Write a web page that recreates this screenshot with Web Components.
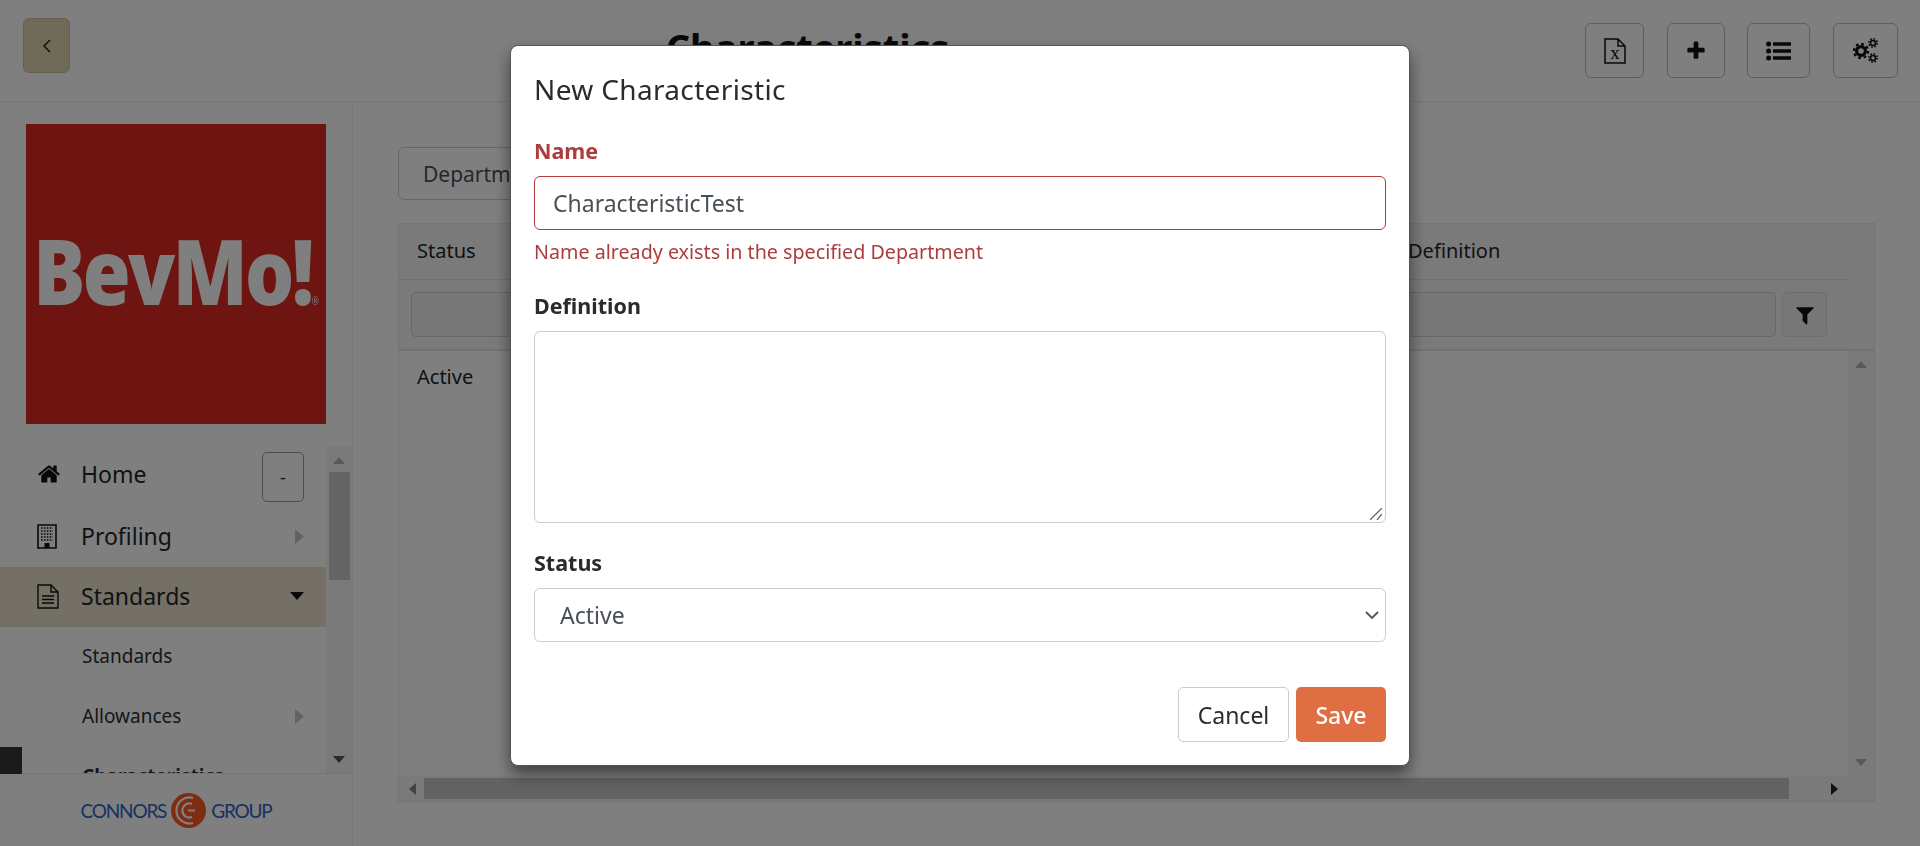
<!DOCTYPE html>
<html lang="en">
<head>
<meta charset="utf-8">
<title>Characteristics</title>
<style>
    html, body { margin: 0; height: 100%; overflow: hidden; background: #fff; }
    body { font-family: "Noto Sans", "Open Sans", sans-serif; color: #212529; }
</style>
</head>
<body>
<app-page></app-page>
<modal-dialog heading="New Characteristic"></modal-dialog>

<script>
const ICONS = {
    back: '<svg width="10" height="14" viewBox="0 0 10 14"><path d="M8 1L2 7l6 6" fill="none" stroke="#111" stroke-width="1.4"/></svg>',
    excel: '<svg width="22" height="26" viewBox="0 0 22 26"><path d="M1 1h13l7 7v17H1z M14 1v7h7" fill="none" stroke="#111" stroke-width="1.5"/><text x="11" y="21" text-anchor="middle" font-family="Liberation Serif, serif" font-size="19" fill="#111">x</text></svg>',
    plus: '<svg width="22" height="22" viewBox="0 0 1792 1792"><path fill="#111" d="M1600 736v192q0 40-28 68t-68 28h-416v416q0 40-28 68t-68 28h-192q-40 0-68-28t-28-68v-416h-416q-40 0-68-28t-28-68v-192q0-40 28-68t68-28h416v-416q0-40 28-68t68-28h192q40 0 68 28t28 68v416h416q40 0 68 28t28 68z"/></svg>',
    list: '<svg width="25" height="20" viewBox="0 0 25 20"><g fill="#111"><circle cx="2.6" cy="3" r="2.5"/><circle cx="2.6" cy="10" r="2.5"/><circle cx="2.6" cy="17" r="2.5"/><rect x="7" y="1.300" width="18" height="3.400" rx=".5"/><rect x="7" y="8.300" width="18" height="3.400" rx=".5"/><rect x="7" y="15.300" width="18" height="3.400" rx=".5"/></g></svg>',
    cogs: '<svg width="27" height="25" viewBox="0 0 27 25" fill="none" stroke="#111"><circle cx="9" cy="13" r="4.400" stroke-width="3.200"/><circle cx="9" cy="13" r="7" stroke-width="2.400" stroke-dasharray="2.700 2.800"/><circle cx="21" cy="5" r="2.500" stroke-width="1.600"/><circle cx="21" cy="5" r="4.200" stroke-width="1.600" stroke-dasharray="1.600 1.700"/><circle cx="21" cy="20" r="2.500" stroke-width="1.600"/><circle cx="21" cy="20" r="4.200" stroke-width="1.600" stroke-dasharray="1.600 1.700"/></svg>',
    filter: '<svg width="22" height="22" viewBox="0 0 1792 1792"><path fill="#111" d="M1595 295q17 41-14 70l-493 493v742q0 42-39 59-13 5-25 5-27 0-45-19l-256-256q-19-19-19-45v-486l-493-493q-31-29-14-70 17-39 59-39h1280q42 0 59 39z"/></svg>',
    home: '<svg width="24" height="24" viewBox="0 0 1792 1792"><path fill="#111" d="M1472 992v480q0 26-19 45t-45 19h-384v-384h-256v384h-384q-26 0-45-19t-19-45v-480q0-1 .5-3t.5-3l575-474 575 474q1 2 1 6zm223-69l-62 74q-8 9-21 11h-3q-13 0-21-7l-692-577-692 577q-12 8-24 7-13-2-21-11l-62-74q-8-10-7-23.500t11-21.500l719-599q32-26 76-26t76 26l244 204v-195q0-14 9-23t23-9h192q14 0 23 9t9 23v408l219 182q10 8 11 21.500t-7 23.500z"/></svg>',
    building: '<svg width="20" height="25" viewBox="0 0 20 25"><path d="M1 1h18v23H1z" fill="none" stroke="#111" stroke-width="1.600"/><path d="M4 4h12M4 7h12M4 10h12M4 13h12M4 16h12" stroke="#111" stroke-width="1.500" stroke-dasharray="1.600 1.300"/><rect x="7.500" y="19" width="5" height="5" fill="#111"/></svg>',
    file: '<svg width="22" height="25" viewBox="0 0 22 25"><path d="M1 1h13l7 7v16H1z M14 1v7h7" fill="none" stroke="#111" stroke-width="1.400"/><path d="M5 12h12M5 15.500h12M5 19h12" stroke="#111" stroke-width="1.300"/></svg>',
    right: '<svg width="9" height="15" viewBox="0 0 9 15"><path d="M0 0l9 7.500L0 15z" fill="#c4c4c4"/></svg>',
    down: '<svg width="14" height="8" viewBox="0 0 14 8"><path d="M0 0h14L7 8z" fill="#111"/></svg>',
    chevron: '<svg width="14" height="8" viewBox="0 0 14 8"><path d="M1 1l6 6 6-6" fill="none" stroke="#555" stroke-width="1.800"/></svg>'
};

class IconButton extends HTMLElement {
    constructor() {
        super();
        this.attachShadow({ mode: 'open' });
    }

    connectedCallback() {
        const w = this.getAttribute('w') || '58';
        this.shadowRoot.innerHTML = `
            <style>
                :host {
                    display: flex;
                    align-items: center;
                    justify-content: center;
                    box-sizing: border-box;
                    width: ${w}px;
                    height: 55px;
                    border: 1px solid #bbb;
                    border-radius: 6px;
                }
            </style>
            <slot></slot>
        `;
    }
}

class TopBar extends HTMLElement {
    constructor() {
        super();
        this.attachShadow({ mode: 'open' });
    }

    connectedCallback() {
        this.shadowRoot.innerHTML = `
            <style>
                :host {
                    display: flex;
                    align-items: center;
                    box-sizing: border-box;
                    height: 102px;
                    padding: 0 22px 0 23px;
                    border-bottom: 1px solid #eaeaea;
                }
                .back {
                    display: flex;
                    align-items: center;
                    justify-content: center;
                    box-sizing: border-box;
                    width: 47px;
                    height: 55px;
                    margin-bottom: 10px;
                    background: #dfd4ae;
                    border: 1px solid #cdc39f;
                    border-radius: 6px;
                }
                h1 {
                    flex: 1;
                    margin: 0 0 8px;
                    padding-right: 40px;
                    text-align: center;
                    font-size: 38px;
                    font-weight: 700;
                    color: #111;
                }
                .actions { display: flex; }
                .actions icon-button:nth-child(1) { margin-right: 23px; }
                .actions icon-button:nth-child(2) { margin-right: 22px; }
                .actions icon-button:nth-child(3) { margin-right: 23px; }
            </style>
            <div class="back">${ICONS.back}</div>
            <h1>Characteristics</h1>
            <div class="actions">
                <icon-button w="59">${ICONS.excel}</icon-button>
                <icon-button w="58">${ICONS.plus}</icon-button>
                <icon-button w="63">${ICONS.list}</icon-button>
                <icon-button w="65">${ICONS.cogs}</icon-button>
            </div>
        `;
    }
}

class ScrollBar extends HTMLElement {
    constructor() {
        super();
        this.attachShadow({ mode: 'open' });
    }

    connectedCallback() {
        const downArrow = this.getAttribute('down') || '#b0b0b0';
        const thumb = this.getAttribute('thumb') || '108';
        this.shadowRoot.innerHTML = `
            <style>
                :host {
                    display: flex;
                    flex-direction: column;
                    align-items: center;
                    flex: none;
                    box-sizing: border-box;
                    width: 26px;
                    background: #f5f5f5;
                }
                .up { margin: 10px 0 8px; }
                .thumb { width: 21px; height: ${thumb}px; background: #c8c8c8; }
                .down { margin-top: auto; margin-bottom: 10px; }
                svg { display: block; flex: none; }
            </style>
            <svg class="up" width="12" height="7" viewBox="0 0 12 7"><path d="M0 7h12L6 0z" fill="#b0b0b0"/></svg>
            <div class="thumb"></div>
            <svg class="down" width="12" height="7" viewBox="0 0 12 7"><path d="M0 0h12L6 7z" fill="${downArrow}"/></svg>
        `;
    }
}

class NavItem extends HTMLElement {
    constructor() {
        super();
        this.attachShadow({ mode: 'open' });
    }

    connectedCallback() {
        const sub = this.hasAttribute('sub');
        const active = this.hasAttribute('active');
        const bold = this.hasAttribute('bold');
        const lift = this.getAttribute('lift') || '2';
        this.shadowRoot.innerHTML = `
            <style>
                :host {
                    display: flex;
                    align-items: center;
                    flex: none;
                    box-sizing: border-box;
                    height: 60px;
                    padding: 0 22px ${lift}px 37px;
                    background: ${active ? '#eae0ca' : 'transparent'};
                    font-size: ${sub ? '19px' : '23px'};
                    font-weight: ${bold ? 700 : 400};
                    color: ${sub ? '#2b2f33' : '#212529'};
                }
                .icon { display: flex; width: 44px; flex: none; }
                .sub-gap { width: 45px; flex: none; }
                .end { margin-left: auto; display: flex; align-items: center; }
            </style>
            ${sub ? '<span class="sub-gap"></span>' : `<span class="icon">${ICONS[this.getAttribute('icon')] || ''}</span>`}
            <span>${this.getAttribute('label')}</span>
            <span class="end"><slot></slot></span>
        `;
    }
}

class SideBar extends HTMLElement {
    constructor() {
        super();
        this.attachShadow({ mode: 'open' });
    }

    connectedCallback() {
        this.shadowRoot.innerHTML = `
            <style>
                :host {
                    display: flex;
                    flex-direction: column;
                    flex: none;
                    position: relative;
                    box-sizing: border-box;
                    width: 353px;
                    border-right: 1px solid #eaeaea;
                }
                .logo {
                    display: flex;
                    align-items: center;
                    justify-content: center;
                    flex: none;
                    width: 300px;
                    height: 300px;
                    margin: 22px 0 23px 26px;
                    background: #dc2822;
                    overflow: hidden;
                }
                .logo span {
                    flex: none;
                    margin-bottom: 8px;
                    font-family: "Open Sans", sans-serif;
                    font-weight: 800;
                    font-size: 90px;
                    letter-spacing: -3px;
                    color: #fff;
                    white-space: nowrap;
                    transform: scaleX(.86);
                    filter: blur(.6px);
                }
                .logo small { font-size: 10px; font-weight: 400; letter-spacing: 0; }
                .menu {
                    display: flex;
                    flex: 1;
                    min-height: 0;
                    overflow: hidden;
                }
                .items {
                    display: flex;
                    flex-direction: column;
                    flex: 1;
                    min-width: 0;
                    overflow: hidden;
                }
                .minus {
                    display: flex;
                    align-items: center;
                    justify-content: center;
                    box-sizing: border-box;
                    width: 42px;
                    height: 50px;
                    margin-top: 6px;
                    border: 1px solid #999;
                    border-radius: 5px;
                    font-size: 18px;
                }
                .foot {
                    display: flex;
                    align-items: center;
                    justify-content: center;
                    gap: 5px;
                    flex: none;
                    height: 72px;
                    border-top: 1px solid #eaeaea;
                    font-family: "Lato", sans-serif;
                    font-size: 19px;
                    letter-spacing: -1.2px;
                    color: #2f62c4;
                }
                .foot svg { filter: blur(.4px); }
                .black {
                    position: absolute;
                    left: 0;
                    bottom: 72px;
                    width: 22px;
                    height: 27px;
                    background: #363636;
                }
            </style>
            <div class="logo"><span>BevMo!<small>®</small></span></div>
            <div class="menu">
                <div class="items">
                    <nav-item icon="home" label="Home" lift="6"><span class="minus">-</span></nav-item>
                    <nav-item icon="building" label="Profiling">${ICONS.right}</nav-item>
                    <nav-item icon="file" label="Standards" active>${ICONS.down}</nav-item>
                    <nav-item sub label="Standards"></nav-item>
                    <nav-item sub label="Allowances">${ICONS.right}</nav-item>
                    <nav-item sub bold label="Characteristics"></nav-item>
                </div>
                <scroll-bar down="#555"></scroll-bar>
            </div>
            <div class="black"></div>
            <div class="foot">
                <span>CONNORS</span>
                <svg width="35" height="35" viewBox="0 0 35 35"><circle cx="17.500" cy="17.500" r="17.500" fill="#ff5a24"/><path d="M22 5a13 13 0 1 0 0 25M21 11a7 7 0 1 0 0 13M17 17.500h7" fill="none" stroke="#fff" stroke-width="2.200"/></svg>
                <span>GROUP</span>
            </div>
        `;
    }
}

class DataGrid extends HTMLElement {
    constructor() {
        super();
        this.attachShadow({ mode: 'open' });
    }

    connectedCallback() {
        this.shadowRoot.innerHTML = `
            <style>
                :host {
                    display: flex;
                    flex-direction: column;
                    box-sizing: border-box;
                    flex: none;
                    width: 1477px;
                    height: 579px;
                    border: 1px solid #e8e8e8;
                    font-size: 20px;
                }
                .head {
                    display: flex;
                    flex-direction: column;
                    flex: none;
                    height: 127px;
                    background: #f5f5f5;
                    border-bottom: 2px solid #e2e2e2;
                    box-sizing: border-box;
                }
                .titles {
                    display: grid;
                    grid-template-columns: 991px 1fr;
                    align-items: center;
                    box-sizing: border-box;
                    height: 56px;
                    width: 1449px;
                    padding: 0 0 3px 18px;
                    border-bottom: 1px solid #e2e2e2;
                }
                .filters {
                    display: flex;
                    gap: 6px;
                    padding: 12px 0 0 12px;
                }
                .filter-input {
                    box-sizing: border-box;
                    width: 1365px;
                    height: 45px;
                    background: #eee;
                    border: 1px solid #cfcfcf;
                    border-radius: 5px;
                }
                .filter-btn {
                    display: flex;
                    align-items: center;
                    justify-content: center;
                    box-sizing: border-box;
                    width: 45px;
                    height: 45px;
                    background: #eee;
                    border: 1px solid #ddd;
                    border-radius: 5px;
                }
                .body { display: flex; flex: 1; min-height: 0; }
                .rows { flex: 1; padding: 12px 18px; }
                .bottom {
                    display: flex;
                    align-items: center;
                    flex: none;
                    height: 25px;
                    background: #f5f5f5;
                }
                .left-arrow { margin: 0 8px 0 10px; }
                .bar { width: 1365px; height: 21px; background: #c4c4c4; }
                .right-arrow { margin-left: 42px; }
            </style>
            <div class="head">
                <div class="titles"><span>Status</span><span>Definition</span></div>
                <div class="filters">
                    <div class="filter-input"></div>
                    <div class="filter-btn">${ICONS.filter}</div>
                </div>
            </div>
            <div class="body">
                <div class="rows">Active</div>
                <scroll-bar thumb="0"></scroll-bar>
            </div>
            <div class="bottom">
                <svg class="left-arrow" width="7" height="12" viewBox="0 0 7 12"><path d="M7 0v12L0 6z" fill="#888"/></svg>
                <div class="bar"></div>
                <svg class="right-arrow" width="7" height="12" viewBox="0 0 7 12"><path d="M0 0v12l7-6z" fill="#222"/></svg>
            </div>
        `;
    }
}

class MainPanel extends HTMLElement {
    constructor() {
        super();
        this.attachShadow({ mode: 'open' });
    }

    connectedCallback() {
        this.shadowRoot.innerHTML = `
            <style>
                :host {
                    display: flex;
                    flex-direction: column;
                    flex: 1;
                    gap: 23px;
                    padding: 45px 45px 0;
                }
                .department {
                    display: flex;
                    align-items: center;
                    box-sizing: border-box;
                    width: 400px;
                    height: 53px;
                    padding-left: 24px;
                    border: 1px solid #ccc;
                    border-radius: 6px;
                    font-size: 21px;
                    color: #495057;
                }
            </style>
            <div class="department">Department</div>
            <data-grid></data-grid>
        `;
    }
}

class AppPage extends HTMLElement {
    constructor() {
        super();
        this.attachShadow({ mode: 'open' });
    }

    connectedCallback() {
        this.shadowRoot.innerHTML = `
            <style>
                :host { display: flex; flex-direction: column; height: 846px; overflow: hidden; }
                .columns { display: flex; flex: 1; min-height: 0; }
            </style>
            <top-bar></top-bar>
            <div class="columns">
                <side-bar></side-bar>
                <main-panel></main-panel>
            </div>
        `;
    }
}

class FormField extends HTMLElement {
    constructor() {
        super();
        this.attachShadow({ mode: 'open' });
    }

    connectedCallback() {
        const invalid = this.hasAttribute('invalid');
        this.shadowRoot.innerHTML = `
            <style>
                :host { display: block; position: relative; }
                label {
                    display: block;
                    height: 27px;
                    margin-bottom: 12px;
                    line-height: 27px;
                    font-size: 21.5px;
                    font-weight: 700;
                    color: ${invalid ? '#ad3d3d' : '#2b2b2b'};
                }
            </style>
            <label>${this.getAttribute('label')}</label>
            <slot></slot>
        `;
    }
}

class ModalDialog extends HTMLElement {
    constructor() {
        super();
        this.attachShadow({ mode: 'open' });
    }

    connectedCallback() {
        this.shadowRoot.innerHTML = `
            <style>
                :host {
                    position: fixed;
                    inset: 0;
                    display: flex;
                    justify-content: center;
                    align-items: flex-start;
                    background: rgba(0, 0, 0, .5);
                }
                .dialog {
                    box-sizing: border-box;
                    width: 900px;
                    height: 721px;
                    margin-top: 45px;
                    padding: 0 23px;
                    background: #fff;
                    border: 1px solid #555;
                    border-radius: 8px;
                    box-shadow: 0 8px 16px rgba(0, 0, 0, .5);
                }
                h5 {
                    margin: 0;
                    padding: 24px 0 0;
                    height: 48px;
                    line-height: 38px;
                    font-size: 28px;
                    font-weight: 400;
                    letter-spacing: .35px;
                    color: #2b2b2b;
                }
                .box {
                    display: flex;
                    align-items: center;
                    box-sizing: border-box;
                    width: 852px;
                    height: 54px;
                    padding-left: 18px;
                    border: 1px solid #ccc;
                    border-radius: 6px;
                    font-size: 23px;
                    color: #495057;
                }
                .box.invalid { border-color: #b23b3b; }
                .box.select { padding: 0 6px 0 25px; justify-content: space-between; }
                .error {
                    height: 28px;
                    margin-top: 8px;
                    line-height: 28px;
                    font-size: 19.7px;
                    color: #ad3d3d;
                }
                textarea {
                    display: block;
                    box-sizing: border-box;
                    width: 852px;
                    height: 192px;
                    margin: 0;
                    border: 1px solid #ccc;
                    border-radius: 6px;
                    outline: none;
                    resize: none;
                }
                .handle { position: absolute; right: 4px; bottom: 3px; }
                .gap { margin-top: 26px; }
                .footer {
                    display: flex;
                    justify-content: flex-end;
                    gap: 7px;
                    margin-top: 45px;
                }
                .btn {
                    display: flex;
                    align-items: center;
                    justify-content: center;
                    box-sizing: border-box;
                    height: 55px;
                    border-radius: 5px;
                    font-size: 23px;
                }
                .cancel { width: 111px; border: 1px solid #ccc; color: #2b2b2b; }
                .save { width: 90px; background: #df6f42; color: #fff; font-weight: 500; }
            </style>
            <div class="dialog">
                <h5>${this.getAttribute('heading')}</h5>
                <form-field label="Name" invalid style="margin-top:19px">
                    <div class="box invalid">CharacteristicTest</div>
                </form-field>
                <div class="error">Name already exists in the specified Department</div>
                <form-field class="gap" label="Definition">
                    <textarea></textarea>
                    <svg class="handle" width="12" height="12" viewBox="0 0 12 12"><path d="M0 12L12 0M7 12l5-6" fill="none" stroke="#666" stroke-width="1.300"/></svg>
                </form-field>
                <form-field class="gap" label="Status">
                    <div class="box select"><span>Active</span>${ICONS.chevron}</div>
                </form-field>
                <div class="footer">
                    <div class="btn cancel">Cancel</div>
                    <div class="btn save">Save</div>
                </div>
            </div>
        `;
    }
}

customElements.define('icon-button', IconButton);
customElements.define('top-bar', TopBar);
customElements.define('scroll-bar', ScrollBar);
customElements.define('nav-item', NavItem);
customElements.define('side-bar', SideBar);
customElements.define('data-grid', DataGrid);
customElements.define('main-panel', MainPanel);
customElements.define('app-page', AppPage);
customElements.define('form-field', FormField);
customElements.define('modal-dialog', ModalDialog);
</script>
</body>
</html>
